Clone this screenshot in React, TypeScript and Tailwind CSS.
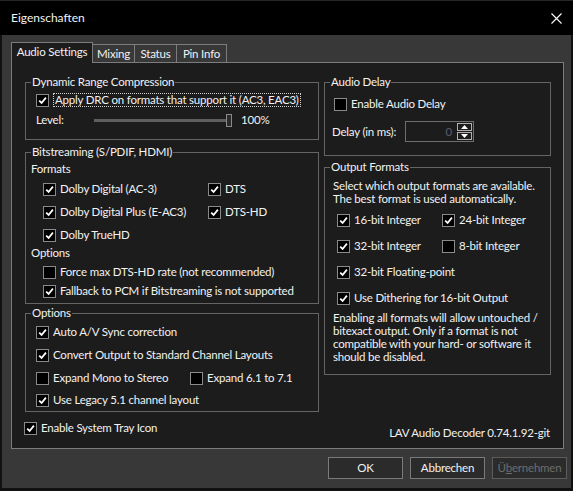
import React from "react";

const font = "font-['Lato','Liberation_Sans',sans-serif]";

function Check({ checked }: { checked?: boolean }) {
  return (
    <span className="flex h-[13px] w-[13px] shrink-0 items-center justify-center border border-[#8a8a8a] bg-black">
      {checked && (
        <svg width="9" height="9" viewBox="0 0 9 9">
          <path d="M1.2 4.6 L3.6 7 L7.9 1.6" stroke="#ffffff" strokeWidth="1.8" fill="none" />
        </svg>
      )}
    </span>
  );
}

function CheckRow({ label, checked, className = "" }: { label: string; checked?: boolean; className?: string }) {
  return (
    <div className={`flex h-[16px] items-center gap-[4px] whitespace-nowrap ${className}`}>
      <Check checked={checked} />
      <span>{label}</span>
    </div>
  );
}

function Group({ title, className = "", children }: { title: string; className?: string; children: React.ReactNode }) {
  return (
    <fieldset className={`border border-[#646464] ${className}`}>
      <legend className="ml-[5px] h-[14px] px-[1px] leading-[14px]">{title}</legend>
      {children}
    </fieldset>
  );
}

export default function App() {
  return (
    <div className={`flex h-[491px] w-[573px] flex-col bg-[#111111] text-[11.5px] tracking-[-0.2px] text-[#f2f2f2] ${font}`}>
      {/* title bar */}
      <div className="flex h-[35px] shrink-0 items-center justify-between border-t border-[#262626] bg-black pl-[11px] pr-[11px]">
        <span className="text-[12px] tracking-normal">Eigenschaften</span>
        <svg width="11" height="11" viewBox="0 0 11 11">
          <path d="M0.5 0.5 L10.5 10.5 M10.5 0.5 L0.5 10.5" stroke="#ffffff" strokeWidth="1.1" />
        </svg>
      </div>

      <div className="mx-[2px] mb-[3px] flex flex-1 flex-col bg-[#383838] pl-[9px] pr-[6px] pt-[7px]">
        {/* tabs */}
        <div className="relative z-10 -mb-px flex h-[21px] items-end whitespace-nowrap">
          <div className="flex h-[21px] w-[82px] items-center justify-center border border-b-0 border-[#7c7c7c] bg-[#1c1c1c] pb-[2px]">
            Audio Settings
          </div>
          <div className="-ml-px mb-px flex h-[18px] w-[43px] items-center justify-center border border-b-0 border-[#7c7c7c]">
            Mixing
          </div>
          <div className="-ml-px mb-px flex h-[18px] w-[43px] items-center justify-center border border-b-0 border-[#7c7c7c]">
            Status
          </div>
          <div className="-ml-px mb-px flex h-[18px] w-[51px] items-center justify-center border border-b-0 border-[#7c7c7c]">
            Pin Info
          </div>
        </div>

        {/* panel */}
        <div className="flex h-[387px] w-[553px] flex-col border border-[#7c7c7c] bg-[#1c1c1c] pl-[13px] pr-[12px] pt-[12px]">
          <div className="flex gap-[5px]">
            {/* left column */}
            <div className="flex w-[294px] flex-col">
              <Group title="Dynamic Range Compression">
                <div className="pb-[11px] pl-[10px] pt-[3px]">
                  <div className="flex h-[16px] items-center gap-[4px] whitespace-nowrap">
                    <Check checked />
                    <span className="border border-dotted border-[#cfcfcf] px-[1px] leading-[12px]">
                      Apply DRC on formats that support it (AC3, EAC3)
                    </span>
                  </div>
                  <div className="mt-[4px] flex h-[16px] items-center">
                    <span className="w-[58px]">Level:</span>
                    <div className="flex w-[138px] items-center">
                      <div className="h-[3px] flex-1 bg-[#5e5e5e]" />
                      <div className="h-[13px] w-[6px] border border-[#8a8a8a] bg-[#2a2a2a]" />
                    </div>
                    <span className="ml-[9px]">100%</span>
                  </div>
                </div>
              </Group>

              <Group title="Bitstreaming (S/PDIF, HDMI)" className="mt-[5px]">
                <div className="pb-[4px] pl-[5px] pt-[2px]">
                  <div className="flex h-[16px] items-center">Formats</div>
                  <div className="mt-[4px] grid grid-cols-[165px_1fr] gap-y-[7px] pl-[12px]">
                    <CheckRow label="Dolby Digital (AC-3)" checked />
                    <CheckRow label="DTS" checked />
                    <CheckRow label="Dolby Digital Plus (E-AC3)" checked />
                    <CheckRow label="DTS-HD" checked />
                    <CheckRow label="Dolby TrueHD" checked />
                  </div>
                  <div className="mt-[2px] flex h-[16px] items-center">Options</div>
                  <div className="mt-[3px] flex flex-col gap-[3px] pl-[12px]">
                    <CheckRow label="Force max DTS-HD rate (not recommended)" />
                    <CheckRow label="Fallback to PCM if Bitstreaming is not supported" checked />
                  </div>
                </div>
              </Group>

              <Group title="Options" className="mt-[2px]">
                <div className="flex flex-col pb-[3px] pl-[10px] pt-[4px]">
                  <CheckRow label="Auto A/V Sync correction" checked />
                  <CheckRow label="Convert Output to Standard Channel Layouts" checked className="mt-[7px]" />
                  <div className="mt-[7px] flex">
                    <CheckRow label="Expand Mono to Stereo" className="w-[154px]" />
                    <CheckRow label="Expand 6.1 to 7.1" />
                  </div>
                  <CheckRow label="Use Legacy 5.1 channel layout" checked className="mt-[6px]" />
                </div>
              </Group>
            </div>

            {/* right column */}
            <div className="flex w-[227px] flex-col">
              <Group title="Audio Delay">
                <div className="pb-[13px] pt-[7px]">
                  <CheckRow label="Enable Audio Delay" className="pl-[9px]" />
                  <div className="mt-[9px] flex h-[21px] items-center whitespace-nowrap pl-[7px]">
                    <span className="w-[73px]">Delay (in ms):</span>
                    <div className="flex h-[21px] w-[69px] items-center justify-end border border-[#6e6e6e] pr-[1px]">
                      <span className="mr-[5px] text-[#5c5c6e]">0</span>
                      <div className="flex flex-col gap-[1px]">
                        <div className="flex h-[8px] w-[15px] items-center justify-center border border-[#b0b0b0]">
                          <svg width="7" height="4" viewBox="0 0 7 4">
                            <path d="M0 4 L3.5 0 L7 4 Z" fill="#ffffff" />
                          </svg>
                        </div>
                        <div className="flex h-[8px] w-[15px] items-center justify-center border border-[#b0b0b0]">
                          <svg width="7" height="4" viewBox="0 0 7 4">
                            <path d="M0 0 L3.5 4 L7 0 Z" fill="#ffffff" />
                          </svg>
                        </div>
                      </div>
                    </div>
                  </div>
                </div>
              </Group>

              <Group title="Output Formats" className="mt-[4px]">
                <div className="pb-[11px] pt-[5px]">
                  <p className="whitespace-nowrap pl-[8px] leading-[13px]">
                    Select which output formats are available.
                    <br />
                    The best format is used automatically.
                  </p>
                  <div className="mt-[7px] grid grid-cols-[105px_1fr] gap-y-[10px] pl-[12px]">
                    <CheckRow label="16-bit Integer" checked />
                    <CheckRow label="24-bit Integer" checked />
                    <CheckRow label="32-bit Integer" checked />
                    <CheckRow label="8-bit Integer" />
                    <CheckRow label="32-bit Floating-point" checked className="col-span-2" />
                    <CheckRow label="Use Dithering for 16-bit Output" checked className="col-span-2" />
                  </div>
                  <p className="mt-[5px] whitespace-nowrap pl-[8px] leading-[13px]">
                    Enabling all formats will allow untouched /
                    <br />
                    bitexact output. Only if a format is not
                    <br />
                    compatible with your hard- or software it
                    <br />
                    should be disabled.
                  </p>
                </div>
              </Group>
            </div>
          </div>

          <div className="-ml-px mt-[8px] flex items-start justify-between">
            <CheckRow label="Enable System Tray Icon" checked />
            <span className="mt-[4px] pr-[1px]">LAV Audio Decoder 0.74.1.92-git</span>
          </div>
        </div>

        {/* buttons */}
        <div className="-mr-[2px] mt-[8px] flex justify-end gap-[7px]">
          <button className="h-[22px] w-[75px] border border-[#7a7a7a] bg-[#2b2b2b]">OK</button>
          <button className="h-[22px] w-[75px] border border-[#7a7a7a] bg-[#2b2b2b]">Abbrechen</button>
          <button className="h-[22px] w-[75px] border border-[#5c5c5c] bg-[#2b2b2b] text-[#6d6d6d]">
            Ü<span className="underline">b</span>ernehmen
          </button>
        </div>
      </div>
    </div>
  );
}
